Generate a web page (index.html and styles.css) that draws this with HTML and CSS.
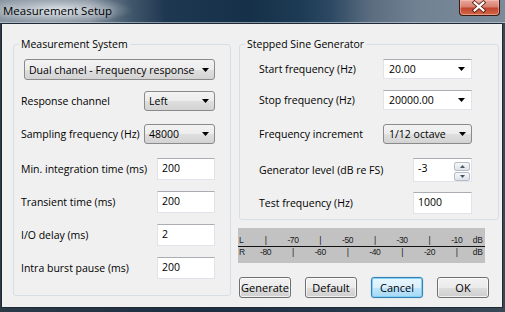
FILE: index.html
```html
<!DOCTYPE html>
<html>
<head>
<meta charset="utf-8">
<title>Measurement Setup</title>
<link rel="stylesheet" href="styles.css">
</head>
<body>
<div class="window">
  <div class="titlebar">
    <span class="title">Measurement Setup</span>
    <div class="close">
      <svg width="41" height="16" viewBox="0 0 41 16">
        <path d="M16 3.5 L25 11.5 M25 3.5 L16 11.5" stroke="#5a1a10" stroke-width="4" stroke-linecap="square" fill="none"/>
        <path d="M16 3.5 L25 11.5 M25 3.5 L16 11.5" stroke="#ffffff" stroke-width="2.2" stroke-linecap="square" fill="none"/>
      </svg>
    </div>
  </div>
  <div class="client">
    <fieldset class="group group-left">
      <legend>Measurement System</legend>
      <div class="combo combo-wide"><span>Dual chanel - Frequency response</span><svg class="arrow" width="7" height="4" viewBox="0 0 7 4"><polygon points="0,0 7,0 3.5,4" fill="#000"/></svg></div>
      <div class="row row-c1"><span>Response channel</span><div class="combo combo-small"><span>Left</span><svg class="arrow" width="7" height="4" viewBox="0 0 7 4"><polygon points="0,0 7,0 3.5,4" fill="#000"/></svg></div></div>
      <div class="row row-c2"><span>Sampling frequency (Hz)</span><div class="combo combo-small"><span>48000</span><svg class="arrow" width="7" height="4" viewBox="0 0 7 4"><polygon points="0,0 7,0 3.5,4" fill="#000"/></svg></div></div>
      <div class="row row-i1"><span>Min. integration time (ms)</span><div class="edit edit-left">200</div></div>
      <div class="row row-i"><span>Transient time (ms)</span><div class="edit edit-left">200</div></div>
      <div class="row row-i"><span>I/O delay (ms)</span><div class="edit edit-left">2</div></div>
      <div class="row row-i"><span>Intra burst pause (ms)</span><div class="edit edit-left">200</div></div>
    </fieldset>
    <div class="right-col">
      <fieldset class="group group-right">
        <legend>Stepped Sine Generator</legend>
        <div class="row row-r1"><span>Start frequency (Hz)</span><div class="ecombo"><span>20.00</span><svg class="arrow" width="7" height="4" viewBox="0 0 7 4"><polygon points="0,0 7,0 3.5,4" fill="#000"/></svg></div></div>
        <div class="row row-r2"><span>Stop frequency (Hz)</span><div class="ecombo"><span>20000.00</span><svg class="arrow" width="7" height="4" viewBox="0 0 7 4"><polygon points="0,0 7,0 3.5,4" fill="#000"/></svg></div></div>
        <div class="row row-r3"><span>Frequency increment</span><div class="combo combo-right"><span>1/12 octave</span><svg class="arrow" width="7" height="4" viewBox="0 0 7 4"><polygon points="0,0 7,0 3.5,4" fill="#000"/></svg></div></div>
        <div class="row row-r4"><span>Generator level (dB re FS)</span>
          <div class="edit spin-edit"><span>-3</span>
            <div class="spin">
              <div class="spin-btn"><svg width="5" height="3" viewBox="0 0 5 3"><polygon points="0,3 5,3 2.5,0" fill="#4b5560"/></svg></div>
              <div class="spin-btn"><svg width="5" height="3" viewBox="0 0 5 3"><polygon points="0,0 5,0 2.5,3" fill="#4b5560"/></svg></div>
            </div>
          </div>
        </div>
        <div class="row row-r5"><span>Test frequency (Hz)</span><div class="edit edit-right">1000</div></div>
      </fieldset>
      <div class="meter">
        <div class="meter-row">
          <span class="ch">L</span><span>|</span><span>-70</span><span>|</span><span>-50</span><span>|</span><span>-30</span><span>|</span><span>-10</span><span>dB</span>
        </div>
        <div class="meter-line"></div>
        <div class="meter-row">
          <span class="ch">R</span><span>-80</span><span>|</span><span>-60</span><span>|</span><span>-40</span><span>|</span><span>-20</span><span>|</span><span>dB</span>
        </div>
      </div>
      <div class="buttons">
        <div class="btn">Generate</div>
        <div class="btn">Default</div>
        <div class="btn btn-default">Cancel</div>
        <div class="btn">OK</div>
      </div>
    </div>
  </div>
</div>
</body>
</html>
```
FILE: styles.css
```css
* { box-sizing: border-box; }
html, body { margin: 0; padding: 0; }
body {
  width: 505px;
  height: 312px;
  overflow: hidden;
  font-family: "Open Sans", "Noto Sans", sans-serif;
  font-size: 10.5px;
  color: #000;
}
.window {
  width: 505px;
  height: 312px;
  display: flex;
  flex-direction: column;
  padding: 0 2px 4px 1px;
  background: linear-gradient(90deg, #2c3a48 0%, #1c2e42 40%, #26384a 70%, #3a4856 100%);
}
.titlebar {
  height: 23px;
  flex: none;
  margin: 0 -2px 0 -1px;
  display: flex;
  align-items: flex-start;
  justify-content: space-between;
  background:
    radial-gradient(ellipse 75px 14px at 58px 10px, rgba(230,235,240,0.85), rgba(230,235,240,0) 100%),
    linear-gradient(90deg, #8a96a2 0px, #7f8c99 90px, #42586c 130px, #1f3852 165px, #163049 250px, #1d3b55 300px, #2c4862 330px, #5a6d7f 370px, #718293 420px, #7b8b9a 505px);
  box-shadow: inset 0 -1px 0 rgba(200,210,220,0.6);
}
.title {
  margin: 3px 0 0 3px;
  font-size: 11.5px;
  line-height: 16px;
  text-shadow: 0 0 6px rgba(255,255,255,0.8);
}
.close {
  width: 41px;
  height: 16px;
  margin-right: 5px;
  border: 1px solid #3a1a14;
  border-top: none;
  border-radius: 0 0 4px 4px;
  background: linear-gradient(#e9a99c 0%, #d7806f 45%, #c3442e 55%, #d06a48 100%);
  box-shadow: inset 0 0 0 1px rgba(255,200,190,0.5);
  display: flex;
}
.close svg { display: block; margin: -1px 0 0 -1px; }
.client {
  flex: 1;
  border: 1px solid #1f2a36;
  background: #f0f0f0;
  display: flex;
  align-items: flex-start;
  gap: 8px;
  padding: 12px 0 0 11px;
}
.group {
  margin: 0;
  border: 1px solid #d5dfe5;
  border-radius: 3px;
  min-width: 0;
  padding-bottom: 0;
}
.group legend {
  padding: 0 2px;
  line-height: 16px;
}
.group-left {
  width: 218px;
  height: 260px;
  padding-top: 7px;
  padding-left: 7px;
  padding-right: 15px;
}
.group-left legend { margin-left: -2px; }
.group-right {
  width: 260px;
  height: 184px;
  padding-top: 7px;
  padding-left: 19px;
  padding-right: 26px;
}
.group-right legend { margin-left: -14px; }
.row {
  display: flex;
  align-items: center;
  justify-content: space-between;
}
.row-c1 { margin-top: 11px; }
.row-c2 { margin-top: 13px; }
.row-i1 { margin-top: 14px; }
.row-i { margin-top: 11px; }
.row-r2 { margin-top: 11px; }
.row-r3 { margin-top: 14px; }
.row-r4 { margin-top: 14px; }
.row-r5 { margin-top: 10px; }

.combo {
  height: 20px;
  display: flex;
  align-items: center;
  justify-content: space-between;
  padding: 0 5px 0 4px;
  border: 1px solid #8a8a8a;
  border-radius: 3px;
  background: linear-gradient(#f3f3f3 0%, #ececec 50%, #dfdfdf 51%, #d3d3d3 100%);
  line-height: 16px;
}
.combo-wide { width: 191px; height: 21px; margin-left: 3px; }
.combo-small { width: 71px; }
.combo-right { width: 89px; padding-left: 5px; }
.arrow { display: block; flex: none; }
.ecombo {
  width: 89px;
  height: 20px;
  display: flex;
  align-items: center;
  justify-content: space-between;
  padding: 0 6px 0 5px;
  background: #fff;
  border: 1px solid #e2e3ea;
  border-top-color: #abadb3;
  line-height: 16px;
}
.edit {
  height: 22px;
  background: #fff;
  border: 1px solid #e2e3ea;
  border-top-color: #abadb3;
  padding: 1px 0 0 4px;
  line-height: 16px;
}
.edit-left { width: 58px; }
.edit-right { width: 59px; height: 22px; }
.spin-edit {
  width: 59px;
  height: 24px;
  display: flex;
  justify-content: space-between;
  padding: 1px 1px 0 4px;
}
.spin {
  display: flex;
  flex-direction: column;
  gap: 1px;
  padding-top: 2px;
}
.spin-btn {
  width: 16px;
  height: 9px;
  border: 1px solid #b4bcc6;
  border-radius: 2px;
  background: linear-gradient(#f6f8fa, #dde3ea);
  display: flex;
  align-items: center;
  justify-content: center;
}
.spin-btn svg { display: block; }

.right-col {
  display: flex;
  flex-direction: column;
}
.meter {
  margin: 8px 0 0 -1px;
  width: 247px;
  height: 35px;
  background: #c2c2c2;
  padding-top: 7px;
  font-family: "Liberation Sans", sans-serif;
  font-size: 8.5px;
  letter-spacing: -0.4px;
  color: #1a1a1a;
}
.meter-row {
  display: grid;
  grid-template-columns: 14px repeat(8, 27.3px) 14.6px;
  height: 11px;
  line-height: 11px;
  text-align: center;
}
.meter-row .ch { text-align: left; padding-left: 1px; }
.meter-line { height: 1px; background: #111; }
.buttons {
  margin-top: 14px;
  display: flex;
  gap: 14px;
}
.btn {
  width: 52px;
  height: 21px;
  border: 1px solid #707070;
  border-radius: 3px;
  background: linear-gradient(#f2f2f2 0%, #ebebeb 50%, #dddddd 51%, #cfcfcf 100%);
  box-shadow: inset 0 0 0 1px rgba(255,255,255,0.7);
  display: flex;
  align-items: center;
  justify-content: center;
  font-size: 11px;
  line-height: 16px;
  white-space: nowrap;
}
.btn-default {
  border-color: #3c7fb1;
  background: linear-gradient(#eaf6fd 0%, #d9f0fc 50%, #bee6fd 51%, #a7d9f5 100%);
  box-shadow: inset 0 0 0 1px #7fd1f8, 0 0 1px #48a0d8;
}
```
